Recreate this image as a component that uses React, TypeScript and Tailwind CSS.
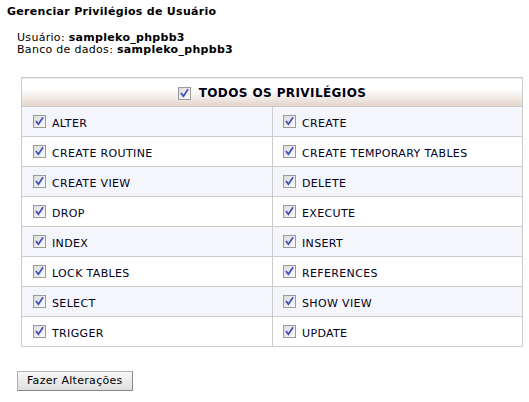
import React from "react";

const rows: [string, string][] = [
  ["ALTER", "CREATE"],
  ["CREATE ROUTINE", "CREATE TEMPORARY TABLES"],
  ["CREATE VIEW", "DELETE"],
  ["DROP", "EXECUTE"],
  ["INDEX", "INSERT"],
  ["LOCK TABLES", "REFERENCES"],
  ["SELECT", "SHOW VIEW"],
  ["TRIGGER", "UPDATE"],
];

function Check() {
  return (
    <span className="inline-flex w-[13px] h-[13px] shrink-0 border border-[#9a9b9b] bg-gradient-to-br from-[#dcdcdc] to-[#fbfbfb] items-center justify-center">
      <svg width="11" height="11" viewBox="0 0 11 11">
        <path d="M2.4 5.6 L4.4 8.2 L8.6 2" fill="none" stroke="#4050b8" strokeWidth="1.7" strokeLinecap="square" />
      </svg>
    </span>
  );
}

export default function App() {
  return (
    <div className="bg-white w-[529px] h-[402px] text-black" style={{ fontFamily: '"DejaVu Sans", Verdana, sans-serif' }}>
      <div className="pl-[7px] pt-[4px] text-[11px] font-bold leading-[16px] tracking-[0.3px]">Gerenciar Privilégios de Usuário</div>
      <div className="pl-[17px] pt-[12px] text-[11px] leading-[12px] tracking-[0.3px]">
        <div>
          Usuário: <b>sampleko_phpbb3</b>
        </div>
        <div>
          Banco de dados: <b>sampleko_phpbb3</b>
        </div>
      </div>
      <div className="pl-[21px] pt-[21px]">
        <table className="w-[502px] border-collapse border border-[#cccccc]">
          <thead>
            <tr>
              <th colSpan={2} className="h-[29px] p-0 bg-gradient-to-b from-white from-40% to-[#e2d4ca]">
                <div className="flex items-center justify-center gap-[8px] pt-[2px]">
                  <Check />
                  <span className="text-[12px] font-bold text-[#000011] tracking-[0.4px]">TODOS OS PRIVILÉGIOS</span>
                </div>
              </th>
            </tr>
          </thead>
          <tbody>
            {rows.map(([a, b], i) => (
              <tr key={a} className={i % 2 === 0 ? "bg-[#f5f6fb]" : "bg-white"}>
                <td className="w-[251px] h-[30px] p-0 border border-[#cccccc]">
                  <div className="flex items-center gap-[6px] pl-[11px]">
                    <Check />
                    <span className="relative top-[3px] text-[11px] text-[#000022] tracking-[0.35px]">{a}</span>
                  </div>
                </td>
                <td className="h-[30px] p-0 border border-[#cccccc]">
                  <div className="flex items-center gap-[6px] pl-[10px]">
                    <Check />
                    <span className="relative top-[3px] text-[11px] text-[#000022] tracking-[0.35px]">{b}</span>
                  </div>
                </td>
              </tr>
            ))}
          </tbody>
        </table>
      </div>
      <div className="pl-[17px] pt-[20px]">
        <button className="h-[20px] px-[9px] text-[11px] text-black tracking-[0.3px] border border-[#b0b0b0] border-r-[#888] border-b-[#888] bg-gradient-to-b from-[#f8f8f8] to-[#dedede] leading-[18px]">
          Fazer Alterações
        </button>
      </div>
    </div>
  );
}
